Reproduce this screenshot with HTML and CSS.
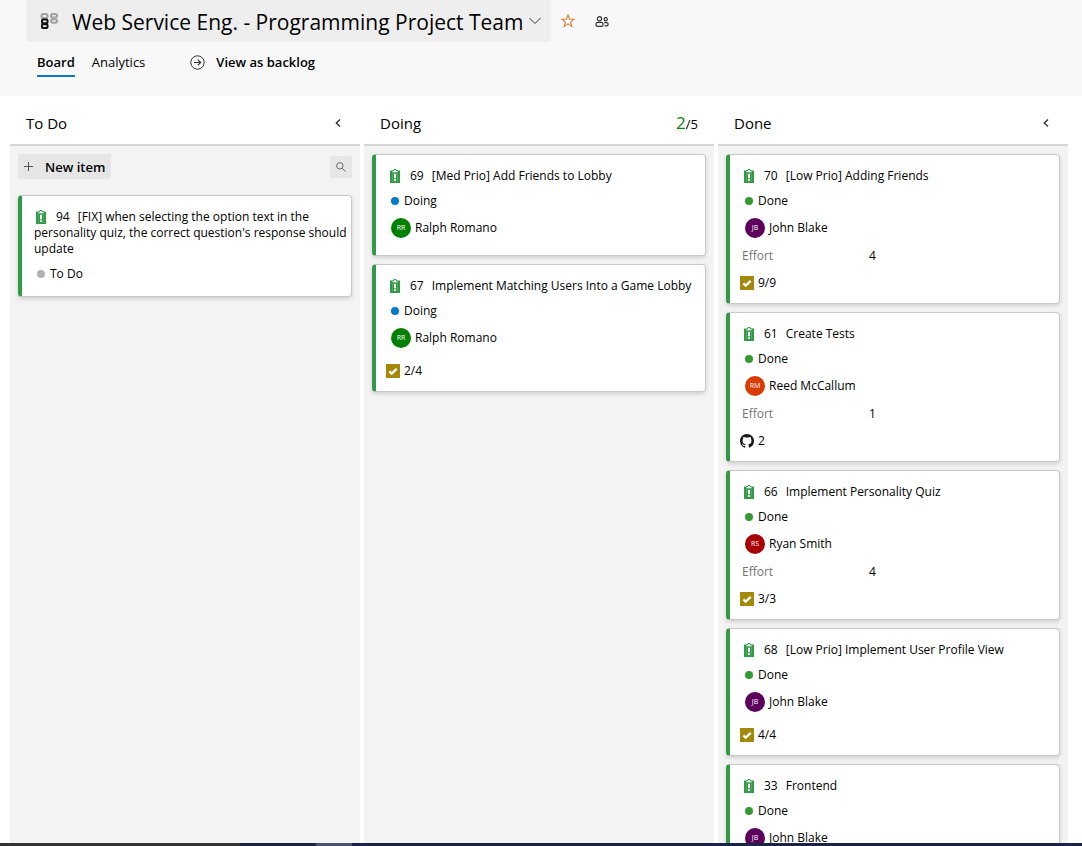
FILE: index.html
```html
<!DOCTYPE html>
<html lang="en">
<head>
<meta charset="utf-8">
<title>Web Service Eng. - Programming Project Team</title>
<link rel="stylesheet" href="styles.css">
</head>
<body>
<svg class="sprite" width="0" height="0" aria-hidden="true">
  <symbol id="issue" viewBox="0 0 10 14">
    <path fill="#339947" d="M0 1.500h2.800V.8h1.200V0h2v.8h1.200v.7H10V14H0z"/>
    <path fill="#fff" d="M2.400 2.200h5.200v1H2.400zM4.200 1h1.600v1.400H4.200z"/>
    <path fill="#fff" d="M4 4.800h2v4.500H4zM4 10.300h2V12H4z"/>
    <path fill="none" stroke="#7fc08b" stroke-width=".4" d="M2.500 3.500v8.700M7.500 3.500v8.700"/>
  </symbol>
  <symbol id="task" viewBox="0 0 14 14">
    <path fill="#a4880a" d="M0 0h14v14H0z"/>
    <path fill="none" stroke="#fff" stroke-width="2.300" d="M3.400 7.400l2.300 2.300 5-4.800"/>
  </symbol>
  <symbol id="github" viewBox="0 0 16 16">
    <path fill="#1b1817" d="M8 0C3.58 0 0 3.58 0 8c0 3.54 2.29 6.53 5.47 7.59.4.07.55-.17.55-.38 0-.19-.01-.82-.01-1.49-2.01.37-2.53-.49-2.69-.94-.09-.23-.48-.94-.82-1.13-.28-.15-.68-.52-.01-.53.63-.01 1.08.58 1.23.82.72 1.21 1.87.87 2.33.66.07-.52.28-.87.51-1.07-1.78-.2-3.64-.89-3.64-3.95 0-.87.31-1.59.82-2.15-.08-.2-.36-1.02.08-2.12 0 0 .67-.21 2.2.82.64-.18 1.32-.27 2-.27s1.36.09 2 .27c1.53-1.04 2.2-.82 2.2-.82.44 1.1.16 1.92.08 2.12.51.56.82 1.27.82 2.15 0 3.07-1.87 3.75-3.65 3.95.29.25.54.73.54 1.48 0 1.07-.01 1.93-.01 2.2 0 .21.15.46.55.38A8.01 8.01 0 0 0 16 8c0-4.42-3.58-8-8-8z"/>
  </symbol>
  <symbol id="chevron" viewBox="0 0 6 8">
    <path fill="none" stroke="#333" stroke-width="1.400" d="M5 .5L1.300 4 5 7.500"/>
  </symbol>
</svg>

<header class="top">
  <div class="title-row">
    <button class="team" type="button">
      <svg width="18" height="16" viewBox="0 0 18 16" fill="none" stroke-width="2">
        <g stroke="#a0a0a0"><rect x="1.500" y="1" width="6" height="4" rx="2"/><rect x="11" y="1" width="6" height="3.600" rx="1.800"/><rect x="11" y="6.200" width="6" height="3.600" rx="1.800"/></g>
        <g stroke="#111"><rect x="2" y="6.500" width="5.500" height="3.700" rx="1"/><rect x="2" y="11.300" width="5.500" height="3.700" rx="1"/></g>
      </svg>
      <span class="team-name">Web Service Eng. - Programming Project Team</span>
      <svg width="12" height="8" viewBox="0 0 12 8" fill="none" stroke="#333"><path d="M.5 1L6 6.500 11.500 1"/></svg>
    </button>
    <button class="plain" type="button" aria-label="Favorite">
      <svg width="14" height="14" viewBox="0 0 14 14" fill="none" stroke="#d67f3c" stroke-width="1.100"><path d="M7 1l1.600 4.200 4.500.1-3.500 2.800 1.200 4.300L7 9.900l-3.800 2.500 1.200-4.300L.9 5.300l4.500-.1z"/></svg>
    </button>
    <button class="plain" type="button" aria-label="Team members">
      <svg width="14" height="11" viewBox="0 0 14 11" fill="none" stroke="#333" stroke-width="1.200"><circle cx="4.500" cy="2.800" r="2.100"/><circle cx="10.700" cy="3.200" r="1.600"/><rect x="1" y="6.400" width="7" height="3.900" rx="1.900"/><path d="M9.300 6.600h2.200c2.200 0 2.200 3.200 0 3.200H9.600"/></svg>
    </button>
  </div>
  <nav class="tabs">
    <a class="tab active" href="#board">Board</a>
    <a class="tab" href="#analytics">Analytics</a>
    <a class="backlog" href="#backlog">
      <svg width="15" height="15" viewBox="0 0 15 15" fill="none" stroke="#333"><circle cx="7.500" cy="7.500" r="6.700"/><path d="M4 7.500h6.500M7.800 4.700l2.800 2.800-2.800 2.800" stroke-width="1.200"/></svg>
      View as backlog
    </a>
  </nav>
</header>

<main class="board" id="board">
  <section class="column">
    <div class="column-head"><h2>To Do</h2><button class="plain" type="button" aria-label="Collapse To Do"><svg width="6" height="8"><use href="#chevron"/></svg></button></div>
    <div class="column-body">
      <div class="tools">
        <button class="new-item" type="button"><svg width="9" height="9" viewBox="0 0 9 9" stroke="#555"><path d="M4.500 0v9M0 4.500h9"/></svg>New item</button>
        <button class="search" type="button" aria-label="Search"><svg width="10" height="10" viewBox="0 0 10 10" fill="none" stroke="#666"><circle cx="3.800" cy="3.800" r="3.200"/><path d="M6.200 6.200L9.600 9.600"/></svg></button>
      </div>
      <article class="card">
        <a class="card-title" href="#94"><svg class="kind"><use href="#issue"/></svg><span class="id">94</span>[FIX] when selecting the option text in the personality quiz, the correct question's response should update</a>
        <div class="state"><i class="dot todo"></i>To Do</div>
      </article>
    </div>
  </section>

  <section class="column">
    <div class="column-head"><h2>Doing</h2><div class="limit"><span class="count">2</span>/5</div></div>
    <div class="column-body">
      <article class="card">
        <a class="card-title" href="#69"><svg class="kind"><use href="#issue"/></svg><span class="id">69</span>[Med Prio] Add Friends to Lobby</a>
        <div class="state"><i class="dot doing"></i>Doing</div>
        <div class="person"><span class="avatar green">RR</span>Ralph Romano</div>
      </article>
      <article class="card">
        <a class="card-title" href="#67"><svg class="kind"><use href="#issue"/></svg><span class="id">67</span>Implement Matching Users Into a Game Lobby</a>
        <div class="state"><i class="dot doing"></i>Doing</div>
        <div class="person"><span class="avatar green">RR</span>Ralph Romano</div>
        <div class="badge"><svg><use href="#task"/></svg>2/4</div>
      </article>
    </div>
  </section>

  <section class="column">
    <div class="column-head"><h2>Done</h2><button class="plain" type="button" aria-label="Collapse Done"><svg width="6" height="8"><use href="#chevron"/></svg></button></div>
    <div class="column-body">
      <article class="card">
        <a class="card-title" href="#70"><svg class="kind"><use href="#issue"/></svg><span class="id">70</span>[Low Prio] Adding Friends</a>
        <div class="state"><i class="dot done"></i>Done</div>
        <div class="person"><span class="avatar purple">JB</span>John Blake</div>
        <div class="field"><span>Effort</span><b>4</b></div>
        <div class="badge"><svg><use href="#task"/></svg>9/9</div>
      </article>
      <article class="card">
        <a class="card-title" href="#61"><svg class="kind"><use href="#issue"/></svg><span class="id">61</span>Create Tests</a>
        <div class="state"><i class="dot done"></i>Done</div>
        <div class="person"><span class="avatar orange">RM</span>Reed McCallum</div>
        <div class="field"><span>Effort</span><b>1</b></div>
        <div class="badge"><svg><use href="#github"/></svg>2</div>
      </article>
      <article class="card">
        <a class="card-title" href="#66"><svg class="kind"><use href="#issue"/></svg><span class="id">66</span>Implement Personality Quiz</a>
        <div class="state"><i class="dot done"></i>Done</div>
        <div class="person"><span class="avatar red">RS</span>Ryan Smith</div>
        <div class="field"><span>Effort</span><b>4</b></div>
        <div class="badge"><svg><use href="#task"/></svg>3/3</div>
      </article>
      <article class="card">
        <a class="card-title" href="#68"><svg class="kind"><use href="#issue"/></svg><span class="id">68</span>[Low Prio] Implement User Profile View</a>
        <div class="state"><i class="dot done"></i>Done</div>
        <div class="person"><span class="avatar purple">JB</span>John Blake</div>
        <div class="badge"><svg><use href="#task"/></svg>4/4</div>
      </article>
      <article class="card">
        <a class="card-title" href="#33"><svg class="kind"><use href="#issue"/></svg><span class="id">33</span>Frontend</a>
        <div class="state"><i class="dot done"></i>Done</div>
        <div class="person"><span class="avatar purple">JB</span>John Blake</div>
      </article>
    </div>
  </section>
</main>
<footer class="taskbar"></footer>
</body>
</html>
```

FILE: styles.css
```css
* { box-sizing: border-box; }

body {
  margin: 0;
  height: 100vh;
  display: flex;
  flex-direction: column;
  overflow: hidden;
  background: #fff;
  color: #000;
  font: 12px/16px "Open Sans", "Noto Sans", sans-serif;
}

a { color: inherit; text-decoration: none; }
svg { flex: none; }
.sprite { position: absolute; }

button {
  border: 0;
  padding: 0;
  background: none;
  color: inherit;
  font: inherit;
}

.plain {
  display: flex;
  padding: 0 3px;
}

.top {
  flex: none;
  height: 96px;
  padding-left: 26px;
  background: #f8f8f8;
}

.title-row {
  display: flex;
  align-items: center;
  gap: 14px;
}

.team {
  display: flex;
  align-items: center;
  height: 42px;
  padding: 0 10px 0 14px;
  margin-right: -7px;
  gap: 6px;
  background: #eee;
  border-radius: 0 0 3px 3px;
}

.team-name {
  padding: 2px 0 0 8px;
  font-size: 21px;
  line-height: 28px;
  font-weight: 400;
}

.tabs {
  display: flex;
  align-items: flex-start;
  gap: 17px;
  padding: 10px 0 0 11px;
  font-size: 13px;
  line-height: 20px;
}

.tab { padding-bottom: 3px; }
.active { border-bottom: 2px solid #0078d4; }
.active, .backlog { font-weight: 600; }

.backlog {
  display: flex;
  align-items: center;
  gap: 11px;
  margin-left: 28px;
}

.board {
  flex: 1;
  min-height: 0;
  display: grid;
  grid-template-columns: repeat(3, minmax(0, 1fr));
  gap: 4px;
  padding: 0 14px 0 10px;
}

.column {
  display: flex;
  flex-direction: column;
  min-height: 0;
  overflow: hidden;
  background: #f3f3f3;
}

.column-head {
  flex: none;
  display: flex;
  align-items: center;
  justify-content: space-between;
  height: 50px;
  padding: 6px 16px 0;
  background: #fff;
  border-bottom: 2px solid #d6d6d6;
}

h2 {
  margin: 0;
  font-size: 15px;
  line-height: 20px;
  font-weight: 400;
}

.limit { font-size: 13px; line-height: 20px; }
.count { font-size: 17px; color: #107c10; }

.column-body {
  display: flex;
  flex-direction: column;
  gap: 8px;
  padding: 8px;
}

.tools {
  display: flex;
  align-items: center;
  justify-content: space-between;
  margin-bottom: 8px;
}

.new-item, .search {
  display: flex;
  align-items: center;
  justify-content: center;
  background: #e6e6e6;
  border-radius: 2px;
}

.new-item {
  height: 25px;
  padding: 0 6px;
  gap: 12px;
  font-size: 13px;
  font-weight: 600;
}

.search { width: 22px; height: 22px; }

.card {
  flex: none;
  display: flex;
  flex-direction: column;
  padding: 13px 0 11px 12px;
  background: #fff;
  border: 1px solid #c8c8c8;
  border-left: 4px solid #339947;
  border-radius: 4px;
  box-shadow: 0 2px 4px rgba(0, 0, 0, .14);
}

.kind {
  width: 10px;
  height: 14px;
  margin: 0 10px 0 2px;
  vertical-align: -3px;
}

.id { margin-right: 8px; font-weight: 500; }

.state {
  display: flex;
  align-items: center;
  margin: 9px 0 3px 3px;
  gap: 5px;
}

.dot { width: 8px; height: 8px; border-radius: 50%; }
.todo { background: #b2b2b2; }
.doing { background: #007acc; }
.done { background: #339933; }

.person {
  display: flex;
  align-items: center;
  gap: 4px;
  margin: 6px 0 6px 3px;
}

.avatar {
  width: 20px;
  border-radius: 50%;
  color: #fff;
  font-size: 7px;
  line-height: 20px;
  text-align: center;
}

.green { background: #008000; }
.purple { background: #5c005c; }
.orange { background: #da3b01; }
.red { background: #a80000; }

.field {
  display: grid;
  grid-template-columns: 127px 1fr;
  margin: 4px 0 2px;
  color: #767676;
}

.field b { color: #000; font-weight: 400; }

.badge {
  display: flex;
  align-items: center;
  gap: 4px;
  height: 18px;
  margin: 8px 0 0 -2px;
}

.badge svg { width: 14px; height: 14px; }

.taskbar {
  flex: none;
  height: 3px;
  background: linear-gradient(to right, #333 240px, #1b2445 240px, #1b2445 316px, #4a5272 316px, #4a5272 352px, #1b2445 352px);
}
```
